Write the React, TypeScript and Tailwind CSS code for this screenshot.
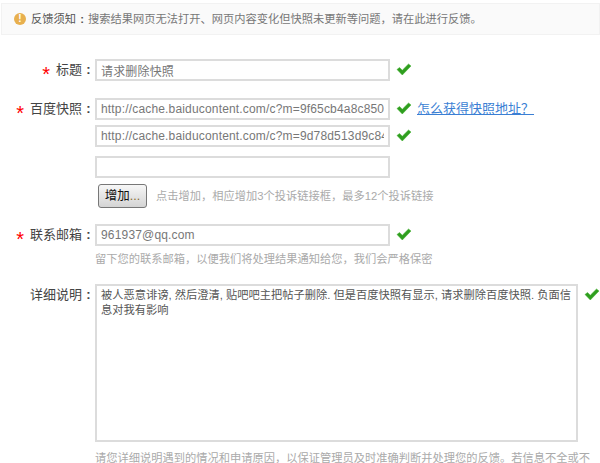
const FONT = "font-['Liberation_Sans','Noto_Sans_CJK_SC',sans-serif]";

const Check = () => (
  <svg width="16" height="13" viewBox="0 0 16 13" className="shrink-0">
    <path d="M1 6.5 L3.5 4.5 L6.3 7.2 L12.5 1 L15 3 L6.3 12 Z" fill="#2f9e1f" stroke="#3fae2a" strokeWidth="0.5" />
  </svg>
);

const Label = ({ text, required }: { text: string; required?: boolean }) => (
  <div className="w-[95px] shrink-0 flex justify-end items-center h-[22px] text-[13px] text-[#444]">
    {required && <span className="text-[#f00] mr-[6px] mt-[7px] text-[20px] leading-none">*</span>}
    <span>{text}</span>
    <span className="w-[13px] text-center font-bold">:</span>
  </div>
);

const Field = ({ value }: { value: string }) => (
  <input
    readOnly
    value={value}
    className="w-[295px] h-[22px] border-2 border-[#dcdcdc] px-[4px] text-[12px] tracking-[0.17px] text-[#777] outline-none bg-white shrink-0"
  />
);

export default function App() {
  return (
    <div className={`${FONT} w-[600px] h-[463px] overflow-hidden bg-white`}>
      <div className="mt-[3px] ml-[1px] h-[32px] flex items-center pl-[12px] bg-[#fafafa] border border-[#f2f2f2] text-[11.25px] whitespace-nowrap">
        <span className="w-[12px] h-[12px] rounded-full bg-[#e8b04e] text-white text-[10px] leading-[12px] text-center font-bold mr-[5px]">!</span>
        <span className="text-[#555]">反馈须知</span>
        <span className="w-[12px] text-center font-bold text-[#555]">:</span>
        <span className="text-[#777]">搜索结果网页无法打开、网页内容变化但快照未更新等问题，请在此进行反馈。</span>
      </div>

      <div className="mt-[24px] flex items-center">
        <Label text="标题" required />
        <Field value="请求删除快照" />
        <span className="ml-[6px] -mt-[1px]"><Check /></span>
      </div>

      <div className="mt-[17px] flex items-center">
        <Label text="百度快照" required />
        <Field value="http://cache.baiducontent.com/c?m=9f65cb4a8c850" />
        <span className="ml-[6px] -mt-[1px]"><Check /></span>
        <a className="ml-[5px] text-[13px] text-[#3b7fd4] underline whitespace-nowrap">怎么获得快照地址？</a>
      </div>
      <div className="mt-[5px] pl-[95px] flex items-center">
        <Field value="http://cache.baiducontent.com/c?m=9d78d513d9c84" />
        <span className="ml-[6px] -mt-[1px]"><Check /></span>
      </div>
      <div className="mt-[7px] pl-[95px]">
        <Field value="" />
      </div>
      <div className="mt-[6px] pl-[98px] flex items-center">
        <button className="w-[49px] h-[24px] rounded-[3px] border border-[#777] bg-gradient-to-b from-[#f7f7f7] to-[#d4d4d4] text-[12.5px] text-[#111] leading-none">
          增加<span className="text-[#8a6d2f]">...</span>
        </button>
        <span className="ml-[9px] text-[11.25px] text-[#aaa] whitespace-nowrap">点击增加，相应增加3个投诉链接框，最多12个投诉链接</span>
      </div>

      <div className="mt-[16px] flex items-center">
        <Label text="联系邮箱" required />
        <Field value="961937@qq.com" />
        <span className="ml-[6px] -mt-[1px]"><Check /></span>
      </div>
      <div className="mt-[5px] pl-[95px] h-[16px] leading-[16px] text-[11.25px] text-[#aaa] whitespace-nowrap">
        留下您的联系邮箱，以便我们将处理结果通知给您，我们会严格保密
      </div>

      <div className="mt-[17px] flex items-start">
        <Label text="详细说明" />
        <div className="w-[483px] h-[158px] shrink-0 border-2 border-[#dcdcdc] px-[4px] py-[2px] text-[11.25px] leading-[15px] text-[#555] whitespace-nowrap">
          被人恶意诽谤, 然后澄清, 贴吧吧主把帖子删除. 但是百度快照有显示, 请求删除百度快照. 负面信<br />息对我有影响
        </div>
        <span className="ml-[6px] mt-[4px]"><Check /></span>
      </div>
      <div className="mt-[8px] pl-[95px] text-[11.25px] leading-[16px] text-[#aaa] whitespace-nowrap">
        请您详细说明遇到的情况和申请原因，以保证管理员及时准确判断并处理您的反馈。若信息不全或不
      </div>
    </div>
  );
}
